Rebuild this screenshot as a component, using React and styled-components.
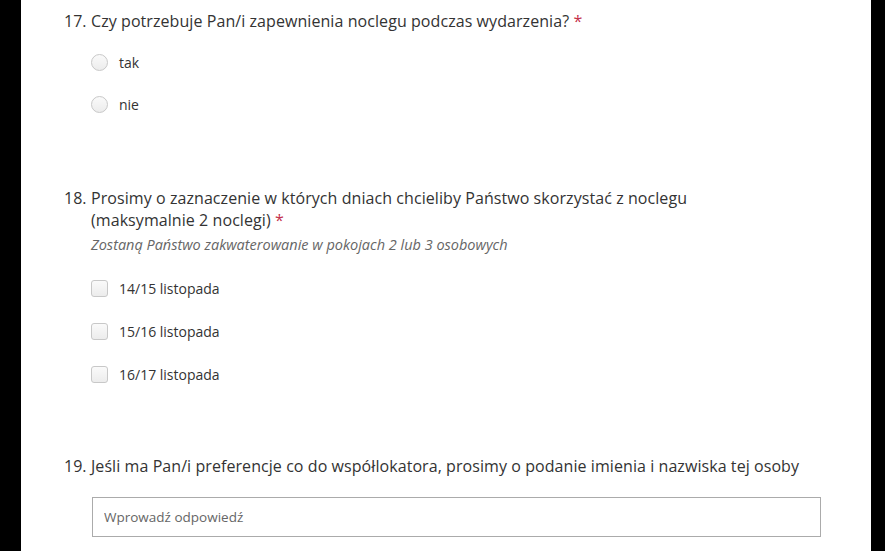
import React from "react";
import styled, { createGlobalStyle } from "styled-components";

const GlobalStyle = createGlobalStyle`
  html, body {
    margin: 0;
    padding: 0;
    background: #000;
  }
  body {
    font-family: "Open Sans", "Noto Sans", sans-serif;
    color: #333;
  }
`;

const Page = styled.div`
  display: flex;
  justify-content: flex-start;
  padding-left: 21px;
  height: 551px;
  overflow: hidden;
`;

const Card = styled.div`
  width: 850px;
  background: #fff;
  padding: 10px 0 0 43px;
  box-sizing: border-box;
`;

const Question = styled.div`
  margin-bottom: ${({ $gap }) => $gap}px;
`;

const Header = styled.div`
  display: flex;
  font-size: 16px;
  line-height: 22px;
  letter-spacing: 0.07px;
  color: #333;
`;

const Num = styled.span`
  flex: 0 0 27px;
  letter-spacing: 0;
`;

const Title = styled.div`
  flex: 1;
  max-width: ${({ $max }) => $max || "none"};
`;

const Star = styled.span`
  color: #c4314b;
`;

const Subtitle = styled.div`
  margin: 4px 0 0 27px;
  font-size: 14.5px;
  line-height: 20px;
  font-style: italic;
  color: #666;
`;

const Options = styled.div`
  margin: ${({ $top }) => $top}px 0 0 27px;
`;

const Option = styled.label`
  display: flex;
  align-items: center;
  height: ${({ $h }) => $h}px;
  font-size: 14px;
  color: #333;
`;

const Radio = styled.span`
  width: 15px;
  height: 15px;
  border: 1px solid #c8c8c8;
  border-radius: 50%;
  background: linear-gradient(#fafafa, #ececec);
  margin-right: 11px;
`;

const Check = styled.span`
  width: 15px;
  height: 15px;
  border: 1px solid #c8c8c8;
  border-radius: 3px;
  background: linear-gradient(#fafafa, #ececec);
  margin-right: 11px;
`;

const Input = styled.input`
  display: block;
  margin: 20px 0 0 28px;
  width: 729px;
  height: 40px;
  box-sizing: border-box;
  border: 1px solid #ababab;
  padding: 0 11px;
  font-family: "Open Sans", "Noto Sans", sans-serif;
  font-size: 13.5px;
  color: #333;
  outline: none;
  &::placeholder {
    color: #666;
  }
`;

export default function App() {
  return (
    <>
      <GlobalStyle />
      <Page>
        <Card>
          <Question $gap={62}>
            <Header>
              <Num>17.</Num>
              <Title>
                Czy potrzebuje Pan/i zapewnienia noclegu podczas wydarzenia? <Star>*</Star>
              </Title>
            </Header>
            <Options $top={9}>
              <Option $h={42}><Radio />tak</Option>
              <Option $h={42}><Radio />nie</Option>
            </Options>
          </Question>

          <Question $gap={59}>
            <Header>
              <Num>18.</Num>
              <Title $max="640px">
                Prosimy o zaznaczenie w których dniach chcieliby Państwo skorzystać z noclegu (maksymalnie 2 noclegi) <Star>*</Star>
              </Title>
            </Header>
            <Subtitle>Zostaną Państwo zakwaterowanie w pokojach 2 lub 3 osobowych</Subtitle>
            <Options $top={12}>
              <Option $h={43}><Check />14/15 listopada</Option>
              <Option $h={43}><Check />15/16 listopada</Option>
              <Option $h={43}><Check />16/17 listopada</Option>
            </Options>
          </Question>

          <Question $gap={0}>
            <Header>
              <Num>19.</Num>
              <Title>
                Jeśli ma Pan/i preferencje co do współlokatora, prosimy o podanie imienia i nazwiska tej osoby
              </Title>
            </Header>
            <Input placeholder="Wprowadź odpowiedź" />
          </Question>
        </Card>
      </Page>
    </>
  );
}
